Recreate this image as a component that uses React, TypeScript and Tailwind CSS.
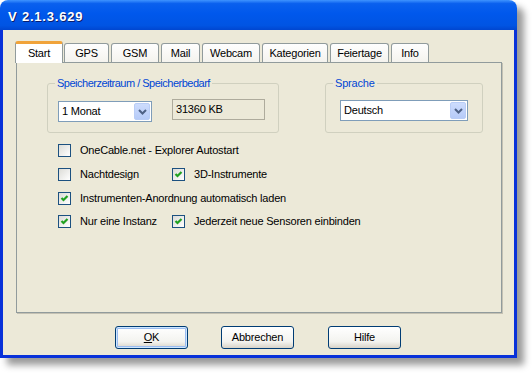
import { ReactNode } from 'react'

const tabs = [
    { label: 'GPS', w: 'w-[45px]' },
    { label: 'GSM', w: 'w-[48px]' },
    { label: 'Mail', w: 'w-[39px]' },
    { label: 'Webcam', w: 'w-[58px]' },
    { label: 'Kategorien', w: 'w-[66px]' },
    { label: 'Feiertage', w: 'w-[59px]' },
    { label: 'Info', w: 'w-[38px]' },
]

function CheckBox({ checked }: { checked?: boolean }) {
    return (
        <div className="w-[13px] h-[13px] shrink-0 border border-[#1c5180] bg-[linear-gradient(135deg,#dcdcd7,#ffffff)]">
            {checked && (
                <svg width="11" height="11" viewBox="0 0 11 11">
                    <path d="M2.5 5 L4.5 7 L8.5 3" fill="none" stroke="#21a121" strokeWidth="2.2" />
                </svg>
            )}
        </div>
    )
}

function Option({ checked, children, w }: { checked?: boolean; children: ReactNode; w?: string }) {
    return (
        <div className={`flex items-center h-[13px] ${w ?? ''}`}>
            <CheckBox checked={checked} />
            <span className="ml-[9px] whitespace-nowrap">{children}</span>
        </div>
    )
}

function Combo({ value, w }: { value: string; w: string }) {
    return (
        <div className={`flex items-center justify-between h-[21px] ${w} border border-[#7f9db9] bg-white pl-[3px] pr-[1px]`}>
            <span>{value}</span>
            <div className="flex items-center justify-center w-[16px] h-[17px] rounded-[2px] border border-[#b9cdf6] bg-[linear-gradient(#cddcfd,#b6cbf8)]">
                <svg width="9" height="6" viewBox="0 0 9 6">
                    <path d="M1 1 L4.5 4.5 L8 1" fill="none" stroke="#4d6185" strokeWidth="2" />
                </svg>
            </div>
        </div>
    )
}

function Button({ children, focus }: { children: ReactNode; focus?: boolean }) {
    return (
        <div
            className={`flex items-center justify-center w-[73px] h-[23px] rounded-[3px] border border-[#003c74] bg-[linear-gradient(#ffffff,#f3f3ef_70%,#d8d3c8)] ${
                focus ? 'shadow-[inset_0_0_0_1px_#cee7ff,inset_0_0_0_2px_#9bbcf0]' : ''
            }`}
        >
            {children}
        </div>
    )
}

export default function App() {
    return (
        <div className="w-[532px] h-[373px] bg-white text-[11px] tracking-[-0.2px] text-black font-['Liberation_Sans',Arial,sans-serif] leading-[13px]">
            <div className="flex flex-col w-[517px] h-[358px] rounded-t-[8px] shadow-[7px_7px_7px_rgba(0,0,0,0.4)]">
                <div className="flex items-center h-[30px] pt-[2px] px-[8px] rounded-t-[8px] bg-[linear-gradient(#3f94ff,#0a60ee_12%,#0058ec_45%,#0054e3_85%,#0046d0)]">
                    <span className="text-white font-bold text-[13px] tracking-[0.8px] [text-shadow:1px_1px_0_#0a1e6e]">
                        V 2.1.3.629
                    </span>
                </div>

                <div className="flex flex-col flex-1 bg-[#ece9d8] border-x-[3px] border-b-[3px] border-[#0831d9]">
                    <div className="pl-[13px] pt-[11px]">
                        <div className="flex items-end h-[21px]">
                            <div className="relative z-10 flex justify-center -ml-[1px] w-[48px] h-[22px] -mb-[1px] pt-[3px] rounded-t-[3px] border-x border-t-[3px] border-x-[#919b9c] border-t-[#f0a33a] bg-white">
                                Start
                            </div>
                            <div className="flex items-end gap-[2px] ml-[1px]">
                                {tabs.map((t) => (
                                    <div
                                        key={t.label}
                                        className={`flex items-center justify-center ${t.w} h-[19px] pt-[1px] rounded-t-[3px] border-x border-t border-[#919b9c] bg-[linear-gradient(#fefefe,#f4f3ee)]`}
                                    >
                                        {t.label}
                                    </div>
                                ))}
                            </div>
                        </div>

                        <div className="flex flex-col w-[486px] h-[251px] border border-[#919b9c] shadow-[1px_1px_0_#c4c1b3] pl-[30px] pt-[14px]">
                            <div className="flex">
                                <fieldset className="w-[232px] h-[56px] rounded-[3px] border border-[#d0d0bf] px-[10px]">
                                    <legend className="-ml-[3px] px-[2px] tracking-[-0.5px] text-[#0046d5]">
                                        Speicherzeitraum / Speicherbedarf
                                    </legend>
                                    <div className="flex items-start mt-[11px]">
                                        <Combo value="1 Monat" w="w-[94px]" />
                                        <div className="flex items-center ml-[20px] -mt-[2px] w-[93px] h-[21px] border border-[#aeab9c] pl-[3px]">
                                            31360 KB
                                        </div>
                                    </div>
                                </fieldset>
                                <fieldset className="ml-[46px] w-[149px] h-[56px] rounded-[3px] border border-[#d0d0bf] px-[14px]">
                                    <legend className="-ml-[7px] px-[2px] text-[#0046d5]">Sprache</legend>
                                    <div className="mt-[10px]">
                                        <Combo value="Deutsch" w="w-[128px]" />
                                    </div>
                                </fieldset>
                            </div>

                            <div className="flex flex-col ml-[11px] mt-[11px]">
                                <Option>OneCable.net - Explorer Autostart</Option>
                                <div className="flex mt-[11px]">
                                    <Option w="w-[114px]">Nachtdesign</Option>
                                    <Option checked>3D-Instrumente</Option>
                                </div>
                                <div className="mt-[11px]">
                                    <Option checked>Instrumenten-Anordnung automatisch laden</Option>
                                </div>
                                <div className="flex mt-[10px]">
                                    <Option checked w="w-[114px]">
                                        Nur eine Instanz
                                    </Option>
                                    <Option checked>Jederzeit neue Sensoren einbinden</Option>
                                </div>
                            </div>
                        </div>
                    </div>

                    <div className="flex pl-[112px] mt-[13px]">
                        <Button focus>
                            <span className="underline">O</span>K
                        </Button>
                        <div className="ml-[33px]">
                            <Button>Abbrechen</Button>
                        </div>
                        <div className="ml-[34px]">
                            <Button>Hilfe</Button>
                        </div>
                    </div>
                </div>
            </div>
        </div>
    )
}
